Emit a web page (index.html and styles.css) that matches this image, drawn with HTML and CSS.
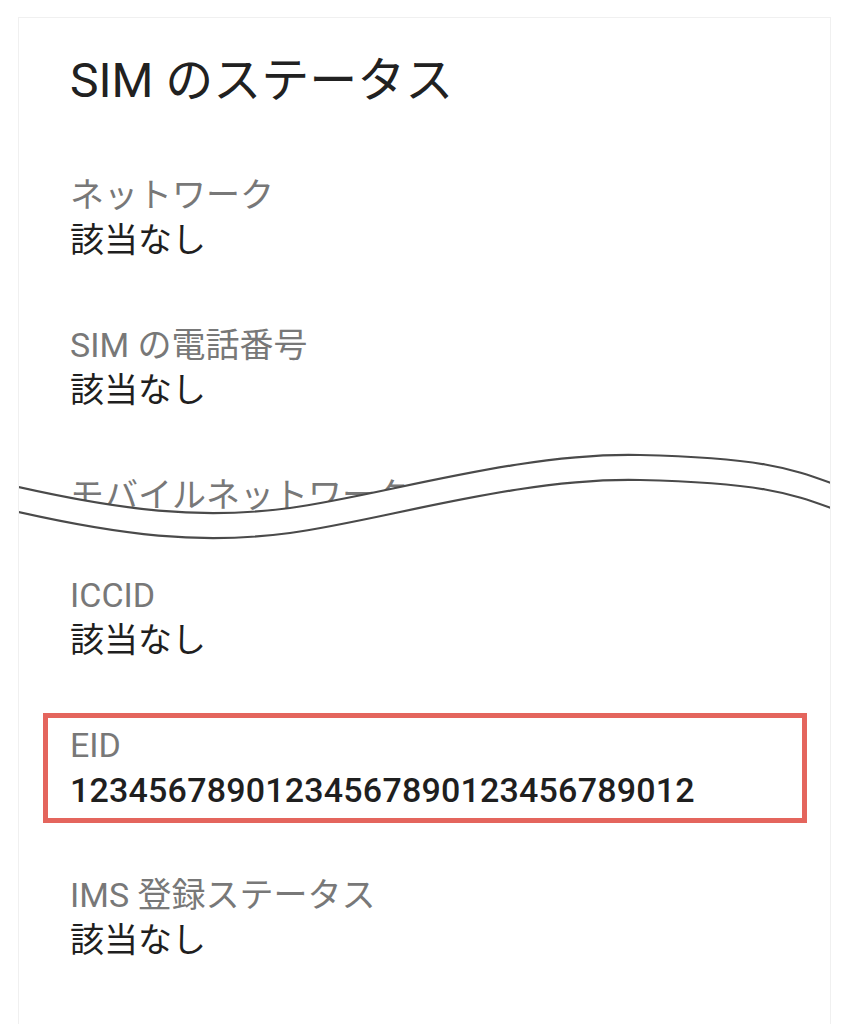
FILE: index.html
```html
<!DOCTYPE html>
<html lang="ja">
<head>
    <meta charset="UTF-8">
    <meta name="viewport" content="width=device-width, initial-scale=1.0">
    <title>SIM のステータス</title>
    <link rel="stylesheet" href="styles.css">
</head>
<body>
    <div class="status-card">
        <h1 class="status-title">SIM のステータス</h1>

        <div class="item">
            <div class="item-body">
                <div class="item-label">ネットワーク</div>
                <div class="item-value">該当なし</div>
            </div>
        </div>
        <div class="item">
            <div class="item-body">
                <div class="item-label">SIM の電話番号</div>
                <div class="item-value">該当なし</div>
            </div>
        </div>

        <!-- omitted rows: the list is torn along a wavy line -->
        <div class="item is-cut">
            <div class="item-body">
                <div class="item-label">モバイルネットワーク</div>
            </div>
            <svg class="tear" viewBox="0 0 811 100" preserveAspectRatio="none">
                <path class="tear-fill" d="M-1 44 C101 67 181 77 271 65 S501 9 621 12 S771 25 812 40 L812 100 L-1 100 Z"/>
                <path class="tear-line" d="M-1 44 C101 67 181 77 271 65 S501 9 621 12 S771 25 812 40"/>
                <path class="tear-line" d="M-1 69 C101 92 181 102 271 90 S501 34 621 37 S771 50 812 65"/>
            </svg>
        </div>

        <div class="item">
            <div class="item-body">
                <div class="item-label">ICCID</div>
                <div class="item-value">該当なし</div>
            </div>
        </div>
        <div class="item is-marked">
            <div class="item-body">
                <div class="item-label">EID</div>
                <div class="item-value">12345678901234567890123456789012</div>
            </div>
        </div>
        <div class="item">
            <div class="item-body">
                <div class="item-label">IMS 登録ステータス</div>
                <div class="item-value">該当なし</div>
            </div>
        </div>
    </div>
</body>
</html>
```

FILE: styles.css
```css
html, body {
    height: 100%;
}
body {
    margin: 0;
    background: #ffffff;
    font-family: Roboto, "Noto Sans CJK JP", sans-serif;
    color: #212121;
    overflow: hidden;
}
.status-card {
    margin: 17px 21px 0 18px;
    padding-top: 35px;
    min-height: 1100px;
    background: #ffffff;
    border: 1px solid #f0f0f0;
    box-sizing: border-box;
}
.status-title {
    margin: 0 0 34px 51px;
    font-size: 48px;
    line-height: 56px;
    font-weight: 400;
    color: #212121;
}
.item {
    padding: 20px 23px 20px 24px;
}
.item-body {
    border: 5px solid transparent;
    padding: 5px 0 5px 22px;
}
.item-label {
    font-size: 34px;
    line-height: 45px;
    color: #787878;
}
.item-value {
    font-size: 34px;
    line-height: 45px;
    color: #1f1f1f;
}
.item.is-marked .item-body {
    border-color: #e4655d;
}
.item.is-marked .item-value {
    font-weight: 500;
    letter-spacing: 0.2px;
}
.item.is-cut {
    position: relative;
    height: 100px;
    padding-bottom: 0;
    box-sizing: border-box;
    overflow: hidden;
}
.tear {
    position: absolute;
    top: 0;
    left: 0;
    width: 100%;
    height: 100px;
}
.tear-fill {
    fill: #ffffff;
}
.tear-line {
    fill: none;
    stroke: #4a4a4a;
    stroke-width: 2.2;
}
```
